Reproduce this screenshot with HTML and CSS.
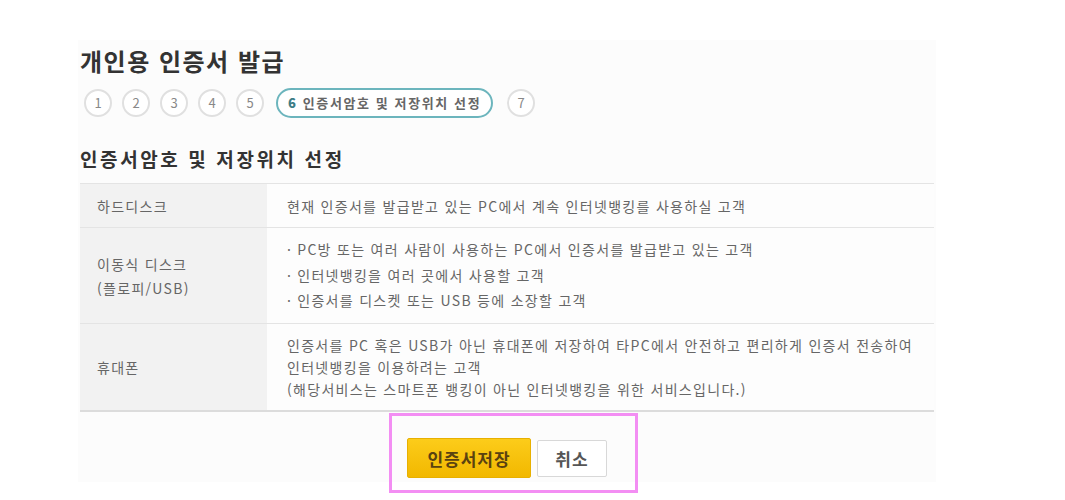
FILE: index.html
```html
<!DOCTYPE html>
<html lang="ko">
<head>
    <meta charset="UTF-8">
    <title>개인용 인증서 발급</title>
    <link rel="stylesheet" href="styles.css">
</head>
<body>

    <div id="panel">
        <h1 class="page-title">개인용 인증서 발급</h1>

        <ol class="steps">
            <li class="step">1</li>
            <li class="step">2</li>
            <li class="step">3</li>
            <li class="step">4</li>
            <li class="step">5</li>
            <li class="step step-current"><b>6</b> 인증서암호 및 저장위치 선정</li>
            <li class="step">7</li>
        </ol>

        <h2 class="section-title">인증서암호 및 저장위치 선정</h2>

        <table class="store-table">
            <tr class="row-hdd">
                <th>하드디스크</th>
                <td>현재 인증서를 발급받고 있는 PC에서 계속 인터넷뱅킹를 사용하실 고객</td>
            </tr>
            <tr class="row-usb">
                <th>이동식 디스크<br>(플로피/USB)</th>
                <td>
                    <ul class="dots">
                        <li>PC방 또는 여러 사람이 사용하는 PC에서 인증서를 발급받고 있는 고객</li>
                        <li>인터넷뱅킹을 여러 곳에서 사용할 고객</li>
                        <li>인증서를 디스켓 또는 USB 등에 소장할 고객</li>
                    </ul>
                </td>
            </tr>
            <tr class="row-phone">
                <th>휴대폰</th>
                <td>인증서를 PC 혹은 USB가 아닌 휴대폰에 저장하여 타PC에서 안전하고 편리하게 인증서 전송하여<br>인터넷뱅킹을 이용하려는 고객<br>(해당서비스는 스마트폰 뱅킹이 아닌 인터넷뱅킹을 위한 서비스입니다.)</td>
            </tr>
        </table>

        <div class="actions">
            <button class="btn btn-save">인증서저장</button>
            <button class="btn btn-cancel">취소</button>
        </div>
    </div>

</body>
</html>
```

FILE: styles.css
```css
body {
    margin: 0;
    padding: 0;
    min-height: 500px;
    background: #fff;
    font-family: "Noto Sans CJK KR", "Noto Sans", sans-serif;
    color: #555;
}

#panel {
    margin: 40px 0 0 78px;
    width: 858px;
    height: 442px;
    background: #fcfcfc;
    box-sizing: border-box;
    padding: 0 2px;
}

.page-title {
    margin: 0;
    padding-top: 4px;
    height: 34px;
    font-size: 24px;
    line-height: 34px;
    font-weight: bold;
    letter-spacing: 1.5px;
    color: #333;
}

.steps {
    list-style: none;
    margin: 10px 0 0 4px;
    padding: 0;
    display: flex;
    gap: 10px;
    height: 30px;
    align-items: center;
}

.step {
    width: 24px;
    height: 24px;
    border: 2px solid #e0e0e0;
    border-radius: 50%;
    background: #fff;
    font-size: 13px;
    line-height: 24px;
    text-align: center;
    color: #888;
}

.step-current {
    width: auto;
    height: 26px;
    line-height: 26px;
    margin-left: 2px;
    margin-right: 4px;
    padding: 0 10px 0 10px;
    border-color: #6cb5bd;
    border-radius: 15px;
    font-size: 13px;
    font-weight: bold;
    letter-spacing: 1.6px;
    color: #666;
}

.step-current b {
    color: #3d7d86;
}

.section-title {
    margin: 29px 0 0 0;
    height: 24px;
    font-size: 19px;
    line-height: 24px;
    font-weight: bold;
    letter-spacing: 2.6px;
    color: #333;
}

.store-table {
    margin-top: 12px;
    width: 100%;
    border-collapse: collapse;
    font-size: 14px;
    letter-spacing: 1.3px;
    color: #666;
}

.store-table th,
.store-table td {
    border-top: 1px solid #e4e4e4;
    text-align: left;
    vertical-align: middle;
    font-weight: normal;
}

.store-table th {
    width: 187px;
    box-sizing: border-box;
    padding: 0 0 0 17px;
    background: #f2f2f2;
    line-height: 24px;
}

.store-table td {
    padding: 0 0 0 20px;
    background: #fdfdfd;
    line-height: 22px;
}

.row-hdd th,
.row-hdd td {
    height: 43px;
}

.row-usb th,
.row-usb td {
    height: 95px;
}

.row-phone th,
.row-phone td {
    height: 86px;
    border-bottom: 2px solid #dcdcdc;
}

.dots {
    list-style: none;
    margin: 0;
    padding: 0;
}

.dots li {
    line-height: 25.5px;
}

.dots li::before {
    content: "·";
    margin-right: 5px;
}

.actions {
    margin: 1px 0 0 309px;
    width: 249px;
    height: 80px;
    box-sizing: border-box;
    border: 3px solid #f38ef3;
    display: flex;
    align-items: flex-start;
    gap: 6px;
    padding: 22px 0 0 15px;
}

.btn {
    font-family: "Noto Sans CJK KR", sans-serif;
    font-size: 17px;
    font-weight: bold;
    letter-spacing: 1px;
    border-radius: 2px;
    cursor: pointer;
}

.btn-save {
    width: 124px;
    height: 40px;
    background: linear-gradient(#fccc1a, #f2b800);
    border: 1px solid #e8b000;
    color: #5a4210;
}

.btn-cancel {
    margin-top: 2px;
    width: 70px;
    height: 37px;
    background: #fff;
    border: 1px solid #d8d8d8;
    color: #555;
}
```
